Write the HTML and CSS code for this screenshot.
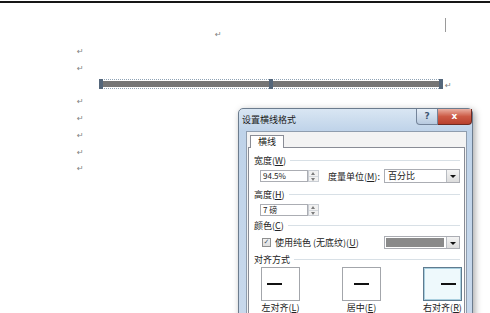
FILE: index.html
```html
<!DOCTYPE html>
<html lang="zh-CN">
<head>
  <meta charset="UTF-8">
  <meta name="viewport" content="width=device-width, initial-scale=1.0">
  <title>设置横线格式</title>
  <link rel="stylesheet" href="styles.css">
</head>
<body>
  <div class="top-rule"></div>

  <div class="doc">
    <div class="line">
      <span class="mark mark-centre">↵</span>
      <span class="caret"></span>
    </div>
    <div class="line"><span class="mark">↵</span></div>
    <div class="line"><span class="mark">↵</span></div>
    <div class="line">
      <div class="hr">
        <span class="handle"></span>
        <span class="bar"></span>
        <span class="handle"></span>
        <span class="bar"></span>
        <span class="handle"></span>
      </div>
      <span class="mark mark-after">↵</span>
    </div>
    <div class="line"><span class="mark">↵</span></div>
    <div class="line"><span class="mark">↵</span></div>
    <div class="line"><span class="mark">↵</span></div>
    <div class="line"><span class="mark">↵</span></div>
    <div class="line"><span class="mark">↵</span></div>
  </div>

  <div class="dialog">
    <div class="titlebar">
      <span class="title">设置横线格式</span>
      <div class="tb-buttons">
        <span class="btn-help">?</span>
        <span class="btn-close">x</span>
      </div>
    </div>

    <div class="client">
      <div class="tabs">
        <span class="tab">横线</span>
      </div>
      <div class="panel">
        <div class="group-title">宽度(<u>W</u>)</div>
        <div class="row row-width">
          <span class="field">94.5%</span>
          <span class="spin"><i class="up"></i><i class="down"></i></span>
          <span class="label unit">度量单位(<u>M</u>):</span>
          <span class="combo">
            <span class="combo-text">百分比</span>
            <span class="combo-btn"></span>
          </span>
        </div>

        <div class="group-title gt-height">高度(<u>H</u>)</div>
        <div class="row row-height">
          <span class="field">7 磅</span>
          <span class="spin"><i class="up"></i><i class="down"></i></span>
        </div>

        <div class="group-title gt-colour">颜色(<u>C</u>)</div>
        <div class="row row-colour">
          <span class="check">✓</span>
          <span class="label">使用纯色 (无底纹)(<u>U</u>)</span>
          <span class="combo">
            <span class="swatch"></span>
            <span class="combo-btn"></span>
          </span>
        </div>

        <div class="group-title gt-align">对齐方式</div>
        <div class="align-row">
          <div class="align-item">
            <span class="align-box box-left"><b class="dash"></b></span>
            <span class="align-label">左对齐(<u>L</u>)</span>
          </div>
          <div class="align-item">
            <span class="align-box box-centre"><b class="dash"></b></span>
            <span class="align-label">居中(<u>E</u>)</span>
          </div>
          <div class="align-item">
            <span class="align-box box-right selected"><b class="dash"></b></span>
            <span class="align-label">右对齐(<u>R</u>)</span>
          </div>
        </div>
      </div>
    </div>
  </div>
</body>
</html>
```

FILE: styles.css
```css
body {
  margin: 0;
  height: 313px;
  overflow: hidden;
  position: relative;
  background: #fff;
  color: #222;
  font-family: "Noto Sans CJK SC", "DejaVu Sans", sans-serif;
}

u {
  text-decoration: underline;
  text-underline-offset: 1px;
}

/* document page */
.top-rule {
  margin-top: 1px;
  height: 2px;
  background: #161616;
}

.doc {
  padding: 23.6px 0 0 77px;
}

.line {
  display: flex;
  align-items: center;
  height: 16.8px;
}

.mark {
  font-family: "DejaVu Sans", sans-serif;
  font-size: 8px;
  line-height: 1;
  color: #808080;
}

.mark-centre {
  margin-left: 138px;
}

.mark-after {
  margin-left: 2px;
  margin-top: 2px;
}

.caret {
  align-self: flex-start;
  margin: -9px 0 0 223px;
  width: 1px;
  height: 14px;
  background: #9a9a9a;
}

.hr {
  align-self: flex-start;
  margin: 2px 0 0 22px;
  width: 344px;
  height: 8px;
  display: flex;
  align-items: center;
  border-top: 1px dotted #8fa3b5;
  border-bottom: 1px dotted #8fa3b5;
}

.hr .bar {
  flex: 1;
  height: 6px;
  background: #767676;
}

.hr .handle {
  width: 4px;
  height: 10px;
  background: #55677b;
}

/* dialog */
.dialog {
  position: absolute;
  left: 238px;
  top: 108px;
  width: 235px;
  height: 230px;
  box-sizing: border-box;
  padding: 0 5px 0 7px;
  border: 1px solid #6c7c8e;
  border-radius: 5px 5px 0 0;
  background: linear-gradient(180deg, #d9e6f3 0, #bfd3e9 22px, #c9d9ec 100%);
  box-shadow: 2px 2px 7px rgba(0, 0, 0, 0.35);
}

.titlebar {
  display: flex;
  height: 22px;
}

.title {
  margin: 5px 0 0 -4px;
  font-size: 9px;
  line-height: 11px;
  color: #1b1b1b;
}

.tb-buttons {
  display: flex;
  margin: 0 -5px 0 auto;
  height: 16px;
}

.btn-help {
  width: 20px;
  border: 1px solid #74849a;
  border-top: none;
  border-radius: 0 0 0 4px;
  background: linear-gradient(180deg, #e6eef7, #b8cadf);
  font-family: "DejaVu Sans", sans-serif;
  font-size: 9px;
  font-weight: bold;
  line-height: 14px;
  text-align: center;
  color: #3d5672;
}

.btn-close {
  width: 33px;
  border: 1px solid #6e2b22;
  border-top: none;
  border-left: none;
  border-radius: 0 0 4px 0;
  background: linear-gradient(180deg, #eab0a2, #cc5a45 50%, #b8402e);
  font-family: "DejaVu Sans", sans-serif;
  font-size: 9px;
  font-weight: bold;
  line-height: 14px;
  text-align: center;
  color: #fff;
}

.client {
  height: 200px;
  padding: 3px 1px 0 1px;
  border: 1px solid #8f9dae;
  background: #f3f3f3;
}

.tabs {
  display: flex;
  padding-left: 2px;
}

.tab {
  position: relative;
  width: 34px;
  height: 13px;
  margin-bottom: -1px;
  box-sizing: border-box;
  border: 1px solid #898c95;
  border-bottom: none;
  background: #fff;
  font-size: 9px;
  line-height: 12px;
  text-align: center;
}

.panel {
  height: 190px;
  padding: 7px 4px 0 5px;
  border: 1px solid #898c95;
  background: #fff;
}

.group-title {
  display: flex;
  align-items: center;
  height: 11px;
  font-size: 9px;
  line-height: 11px;
  white-space: nowrap;
}

.group-title::after {
  content: "";
  flex: 1;
  margin-left: 4px;
  border-top: 1px solid #d8e0e6;
}

.gt-height { margin-top: 6px; }
.gt-colour { margin-top: 4px; }
.gt-align { margin-top: 5px; }

.row {
  display: flex;
  align-items: center;
  padding-left: 6px;
}

.row-width { margin-top: 3px; height: 14px; }
.row-height { margin-top: 4px; height: 12px; }
.row-colour { margin-top: 5px; height: 13px; padding-left: 8px; }

.field {
  width: 48px;
  height: 12px;
  box-sizing: border-box;
  padding-left: 2px;
  border: 1px solid #abadb3;
  font-size: 8px;
  line-height: 10px;
}

.spin {
  display: flex;
  flex-direction: column;
  width: 11px;
  height: 12px;
  box-sizing: border-box;
  border: 1px solid #c9cdd3;
  background: #f1f1f1;
}

.spin i {
  flex: 1;
  position: relative;
}

.spin .up { border-bottom: 1px solid #d5d8dc; }

.spin i::after {
  content: "";
  position: absolute;
  left: 2px;
  top: 1px;
  border-left: 2.5px solid transparent;
  border-right: 2.5px solid transparent;
}

.spin .up::after { border-bottom: 3px solid #7c7c7c; }
.spin .down::after { border-top: 3px solid #7c7c7c; }

.label {
  font-size: 9px;
  line-height: 11px;
  white-space: nowrap;
}

.unit {
  margin-left: 9px;
}

.combo {
  display: flex;
  margin-left: auto;
  width: 76px;
  height: 14px;
  box-sizing: border-box;
  border: 1px solid #abadb3;
  background: #fff;
}

.row-colour .combo {
  height: 13px;
}

.combo-text {
  flex: 1;
  padding-left: 3px;
  font-size: 9px;
  line-height: 12px;
}

.swatch {
  flex: 1;
  margin: 1px 2px 1px 1px;
  background: #8a8a8a;
}

.combo-btn {
  position: relative;
  width: 12px;
  border-left: 1px solid #b8bcc2;
  background: linear-gradient(180deg, #f4f4f4, #dcdcdc);
}

.combo-btn::after {
  content: "";
  position: absolute;
  left: 3px;
  top: 5px;
  border-left: 3px solid transparent;
  border-right: 3px solid transparent;
  border-top: 3px solid #111;
}

.check {
  width: 9px;
  height: 9px;
  box-sizing: border-box;
  margin-right: 4px;
  border: 1px solid #8e8f8f;
  background: linear-gradient(180deg, #f2f2f2, #dedede);
  font-family: "DejaVu Sans", sans-serif;
  font-size: 7px;
  line-height: 7px;
  text-align: center;
  color: #4a5b6b;
}

.align-row {
  display: flex;
  gap: 42px;
  margin-top: 2px;
  padding-left: 7px;
}

.align-item {
  display: flex;
  flex-direction: column;
  align-items: center;
  width: 39px;
}

.align-box {
  display: flex;
  align-items: center;
  width: 39px;
  height: 34px;
  box-sizing: border-box;
  padding: 0 5px;
  border: 1px solid #a3a6ab;
  background: #fff;
}

.box-centre { justify-content: center; }
.box-right { justify-content: flex-end; }

.align-box.selected {
  border-color: #5f7b8f;
  box-shadow: inset 0 0 0 1px #a9cfdf;
  background: #eef9fc;
}

.dash {
  width: 15px;
  height: 2px;
  background: #111;
}

.align-label {
  margin-top: 2px;
  font-size: 9px;
  line-height: 9px;
  white-space: nowrap;
}
```
